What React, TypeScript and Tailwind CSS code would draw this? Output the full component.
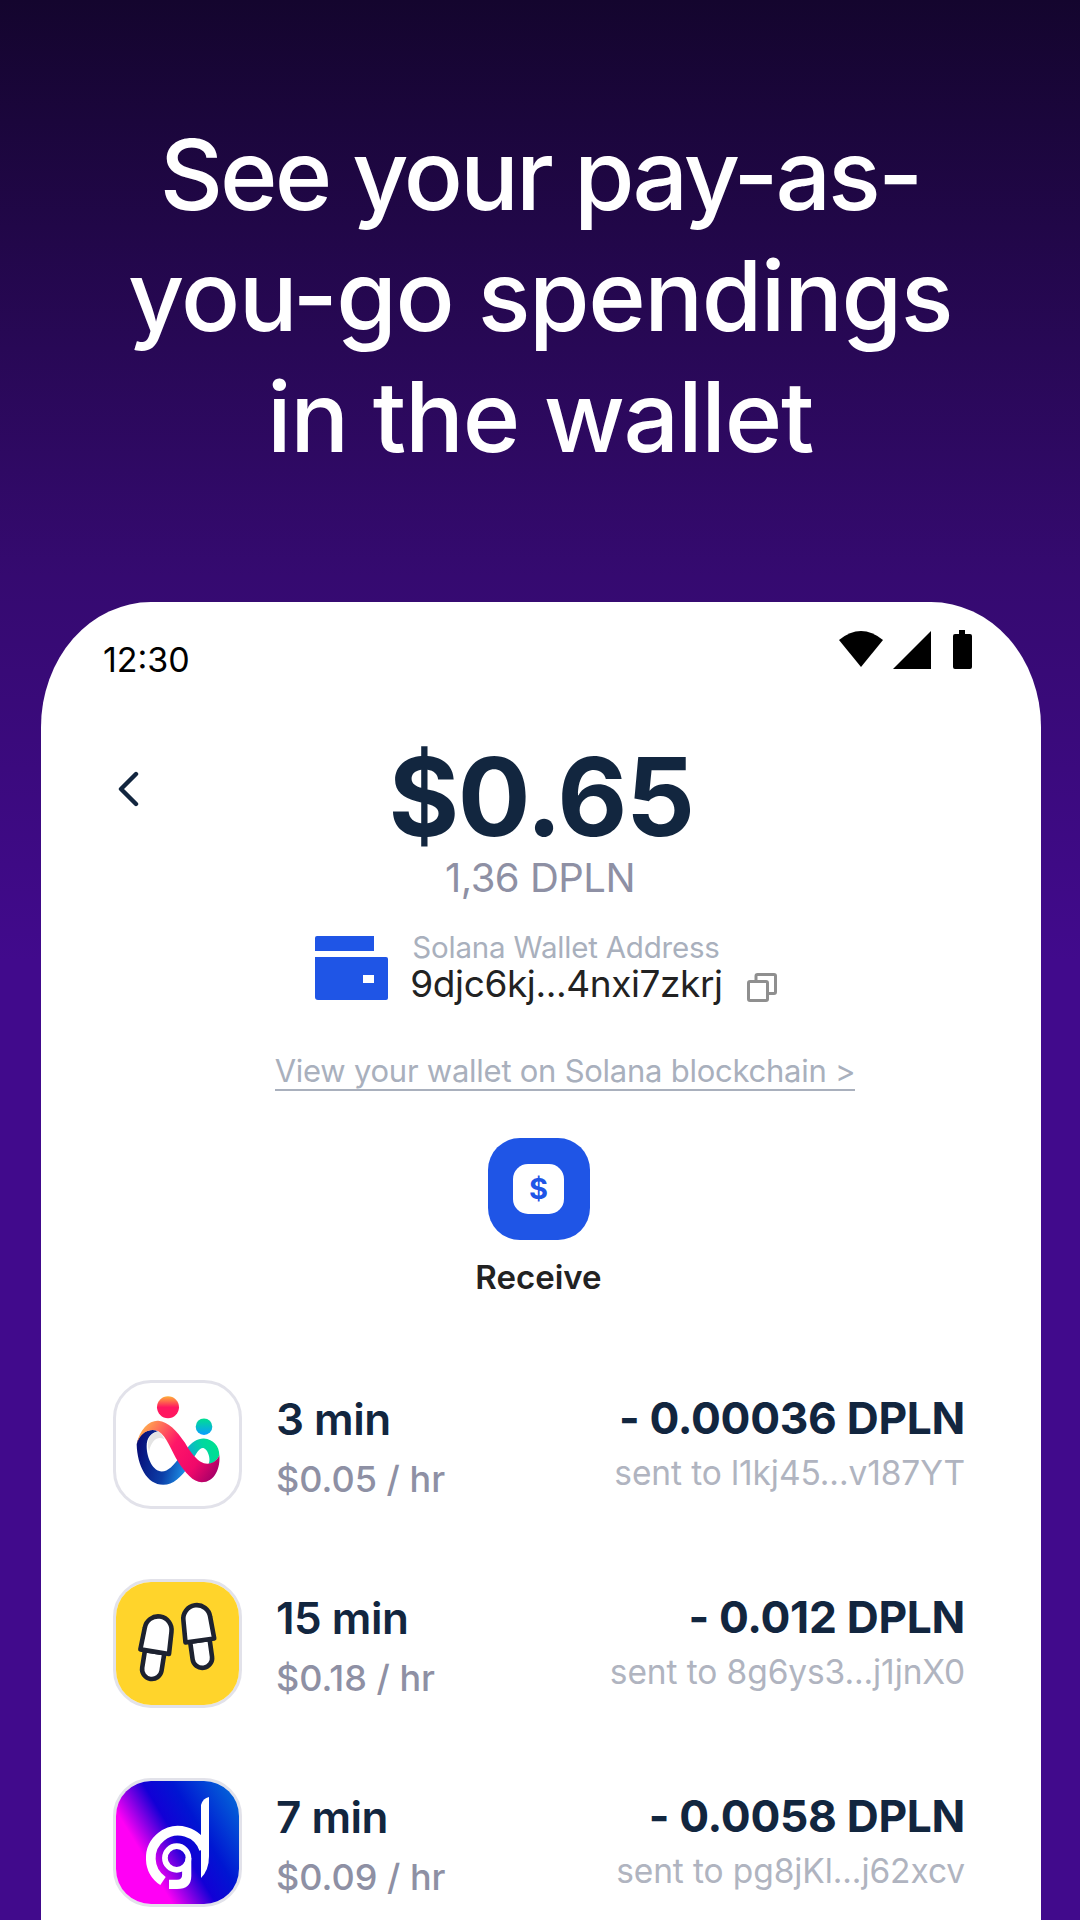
import { ReactNode } from 'react';

const font = { fontFamily: 'Inter, "Liberation Sans", sans-serif' };

function StatusIcons() {
  return (
    <svg width="134" height="40" viewBox="0 0 134 40" className="block">
      <path d="M1 10 Q23 -8 45 10 L23 37 Z" fill="#000" />
      <path d="M55 39 L93 1 V39 Z" fill="#000" />
      <path d="M121 0 h6 v4 h5 q2 0 2 2 v31 q0 2 -2 2 h-15 q-2 0 -2 -2 v-31 q0 -2 2 -2 h4 Z" fill="#000" />
    </svg>
  );
}

function WalletIcon() {
  return (
    <svg width="73" height="65" viewBox="0 0 73 65" className="mb-[5px] block shrink-0">
      <path d="M2 0 H59 V15 H0 V2 Q0 0 2 0 Z" fill="#1f55e6" />
      <path d="M0 21 H71 Q73 21 73 23 V62 Q73 64 71 64 H3 Q0 64 0 61 Z" fill="#1f55e6" />
      <rect x="48" y="39" width="11" height="8" fill="#fff" />
    </svg>
  );
}

function CopyIcon() {
  return (
    <svg width="30" height="29" viewBox="0 0 30 29" fill="none" stroke="#8f8f8f" strokeWidth="3" className="block">
      <rect x="1.5" y="8.5" width="19" height="19" rx="1.5" />
      <path d="M9 8 V3 Q9 1.5 10.5 1.5 H27 Q28.500 1.500 28.500 3 V19 Q28.500 20.500 27 20.500 H21" />
    </svg>
  );
}

function InfinityLogo() {
  return (
    <svg viewBox="3 3 123 123" className="h-full w-full">
      <defs>
        <linearGradient id="dotRed" x1="0" y1="0" x2="0" y2="1">
          <stop offset="0" stopColor="#ffb03a" />
          <stop offset="0.5" stopColor="#ff1760" />
        </linearGradient>
        <linearGradient id="dotTeal" x1="0" y1="0" x2="0" y2="1">
          <stop offset="0" stopColor="#00e08f" />
          <stop offset="1" stopColor="#0a9cff" />
        </linearGradient>
        <linearGradient id="ribTop" gradientUnits="userSpaceOnUse" x1="40" y1="70" x2="250" y2="225">
          <stop offset="0" stopColor="#ffb14d" />
          <stop offset="0.42" stopColor="#ff1668" />
          <stop offset="0.75" stopColor="#f0086a" />
          <stop offset="1" stopColor="#a80068" />
        </linearGradient>
        <linearGradient id="ribBlue" gradientUnits="userSpaceOnUse" x1="25" y1="150" x2="180" y2="190">
          <stop offset="0" stopColor="#07107a" />
          <stop offset="0.55" stopColor="#0c3fa8" />
          <stop offset="1" stopColor="#1f9df0" />
        </linearGradient>
        <linearGradient id="ribTeal" gradientUnits="userSpaceOnUse" x1="170" y1="165" x2="260" y2="130">
          <stop offset="0" stopColor="#12a6d8" />
          <stop offset="0.6" stopColor="#00d8a0" />
          <stop offset="1" stopColor="#00e08f" />
        </linearGradient>
      </defs>
      <circle cx="55" cy="27.300" r="11" fill="url(#dotRed)" />
      <circle cx="91" cy="46.700" r="8.300" fill="url(#dotTeal)" />
      <g transform="translate(17 19) scale(0.3333 0.35)">
        <path d="M20 130 C22 190 50 245 100 245 C130 245 150 225 180 190 L150 165 C130 190 115 207 95 207 C70 207 50 170 50 135 C50 110 62 97 85 92 C60 82 25 95 20 130 Z" fill="url(#ribBlue)" />
        <path d="M85 92 C95 100 100 108 103 115 C85 105 65 115 57 150 C47 115 62 97 85 92 Z" fill="#e4e4e4" />
        <path d="M168 145 C185 122 205 112 222 113 C250 115 268 135 268 160 C262 175 250 185 236 186 C244 170 232 140 218 140 C208 140 200 155 188 172 Z" fill="url(#ribTeal)" />
        <path d="M20 130 C28 85 60 60 85 62 C115 65 140 90 165 125 C180 150 205 185 232 185 C250 185 262 175 268 160 C272 195 255 238 215 238 C190 238 165 210 145 180 C125 150 110 105 85 92 C60 82 30 95 20 130 Z" fill="url(#ribTop)" />
      </g>
    </svg>
  );
}

function Slipper({ x, y, angle }: { x: number; y: number; angle: number }) {
  return (
    <g transform={`translate(${x} ${y}) rotate(${angle})`} stroke="#1d2230" strokeWidth="4.600" fill="#fff" strokeLinejoin="round">
      <path d="M-9.800 4 V21.800 A9.800 9.800 0 0 0 9.800 21.800 V4 Z" />
      <path d="M-14.500 4 L-13.500 -18 A13.500 13.500 0 0 1 13.500 -18 L14.500 4 Z" />
    </g>
  );
}

function SlippersLogo() {
  return (
    <svg viewBox="3 3 123 123" className="h-full w-full">
      <rect width="130" height="130" fill="#ffd42b" />
      <Slipper x={42.300} y={68.700} angle={9} />
      <Slipper x={86.300} y={57.500} angle={-8} />
    </svg>
  );
}

function DgLogo() {
  return (
    <svg viewBox="3 3 123 123" className="h-full w-full">
      <defs>
        <linearGradient id="dgBg" gradientUnits="userSpaceOnUse" x1="0" y1="80" x2="128" y2="2">
          <stop offset="0.18" stopColor="#ff00f5" />
          <stop offset="0.43" stopColor="#1200d6" />
          <stop offset="0.6" stopColor="#0016d2" />
          <stop offset="1" stopColor="#0578da" />
        </linearGradient>
      </defs>
      <rect width="130" height="130" fill="url(#dgBg)" />
      <path d="M50 103 A27.400 27.400 0 1 1 91 71" fill="none" stroke="#fff" strokeWidth="9.700" />
      <path d="M96 19 Q90 20 88 27 V100 Q96 92 96 78 Z" fill="#fff" />
      <circle cx="63.700" cy="80" r="11.800" fill="none" stroke="#fff" strokeWidth="5.700" />
      <path d="M78.300 80 V98 Q78.300 111 64 111 H56 V101.800 H64 Q69.100 101.800 69.100 97 V88 Q72.600 85 72.650 80 Z" fill="#fff" />
    </svg>
  );
}

type Tx = { logo: ReactNode; time: string; rate: string; amount: string; dest: string };

const txs: Tx[] = [
  { logo: <InfinityLogo />, time: '3 min', rate: '$0.05 / hr', amount: '- 0.00036 DPLN', dest: 'sent to l1kj45...v187YT' },
  { logo: <SlippersLogo />, time: '15 min', rate: '$0.18 / hr', amount: '- 0.012 DPLN', dest: 'sent to 8g6ys3...j1jnX0' },
  { logo: <DgLogo />, time: '7 min', rate: '$0.09 / hr', amount: '- 0.0058 DPLN', dest: 'sent to pg8jKl...j62xcv' },
];

function TxRow({ tx }: { tx: Tx }) {
  return (
    <div className="flex h-[129px] items-start">
      <div className="h-[129px] w-[129px] shrink-0 overflow-hidden rounded-[38px] border-[3px] border-[#e2e2ea] bg-white">
        {tx.logo}
      </div>
      <div className="ml-[34px]">
        <div className="mt-[13px] text-[44px] leading-[52px] font-semibold tracking-[-0.5px] text-[#12263f]">{tx.time}</div>
        <div className="mt-[12px] text-[36px] leading-[44px] font-medium text-[#8e90a4]">{tx.rate}</div>
      </div>
      <div className="ml-auto text-right">
        <div className="mt-[12px] text-[44.300px] leading-[52px] font-bold tracking-[-0.3px] text-[#12263f]">{tx.amount}</div>
        <div className="mt-[9px] text-[33.500px] leading-[40px] tracking-[-0.1px] text-[#b0b4c0]">{tx.dest}</div>
      </div>
    </div>
  );
}

export default function App() {
  return (
    <div
      style={font}
      className="flex h-[1920px] w-[1080px] flex-col overflow-hidden bg-[linear-gradient(180deg,#14052e_0%,#350a70_30%,#410a8c_50%,#410a8c_100%)]"
    >
      <h1 className="h-[602px] shrink-0 pt-[114px] text-center text-[98px] leading-[121px] font-medium text-white">
        <span className="tracking-[-3px]">See your pay-as-</span>
        <br />
        <span className="tracking-[-1.500px]">you-go spendings</span>
        <br />
        <span className="tracking-[-1.300px]">in the wallet</span>
      </h1>

      <div className="ml-[41px] w-[1000px] flex-1 rounded-tl-[110px_125px] rounded-tr-[110px_125px] bg-white">
        <div className="flex items-start justify-between pt-[28px] pr-[69px] pl-[62px]">
          <span className="mt-[10px] text-[34px] leading-[40px] text-black">12:30</span>
          <StatusIcons />
        </div>

        <div className="mt-[60px] grid grid-cols-[1fr_auto_1fr] items-center px-[76px]">
          <svg width="22" height="36" viewBox="0 0 22 36" fill="none" stroke="#12263f" strokeWidth="4.400" strokeLinecap="round" strokeLinejoin="round" className="mb-[16px]">
            <path d="M19 3 L4 18 L19 33" />
          </svg>
          <div className="text-[108px] leading-[114px] font-bold tracking-[-1.500px] text-[#12263f]">$0.65</div>
          <div />
        </div>
        <div className="pr-[2px] text-center text-[40px] leading-[48px] tracking-[-0.500px] text-[#8e90a4]">1,36 DPLN</div>

        <div className="mt-[30px] flex items-end justify-center pl-[10px]">
          <WalletIcon />
          <div className="ml-[22px]">
            <div className="pl-[2px] text-[29.500px] leading-[30px] tracking-[-0.200px] text-[#a9b0bd]">Solana Wallet Address</div>
            <div className="text-[37px] leading-[44px] tracking-[-0.400px] text-[#222222]">9djc6kj...4nxi7zkrj</div>
          </div>
          <div className="mb-[4px] ml-[24px]">
            <CopyIcon />
          </div>
        </div>

        <div className="mt-[46px] flex justify-center pl-[48px]">
          <span className="border-b-[2px] border-[#a9b0bd] text-[31px] leading-[37px] tracking-[-0.250px] text-[#a9b0bd]">
            View your wallet on Solana blockchain &gt;
          </span>
        </div>

        <div className="mt-[47px] flex flex-col items-center pr-[5px]">
          <div className="flex h-[102px] w-[102px] items-center justify-center rounded-[32px] bg-[#1f55e6]">
            <div className="flex h-[50px] w-[51px] items-center justify-center rounded-[15px] bg-white text-[29px] font-bold text-[#1f55e6]">
              $
            </div>
          </div>
          <div className="mt-[17px] text-[33px] leading-[40px] font-semibold text-[#222222]">Receive</div>
        </div>

        <div className="mt-[83px] flex flex-col gap-[70px] pr-[76px] pl-[72px]">
          {txs.map((tx) => (
            <TxRow key={tx.time} tx={tx} />
          ))}
        </div>
      </div>
    </div>
  );
}
